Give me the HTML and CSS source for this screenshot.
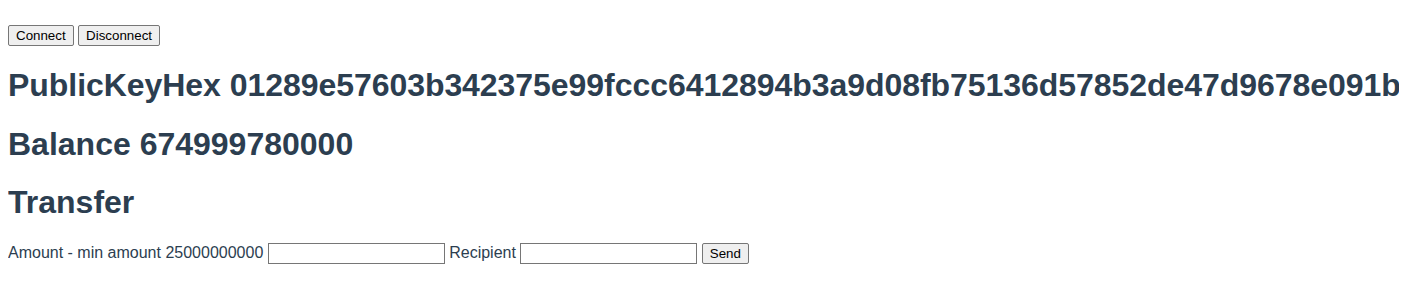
FILE: index.html
```html
<!DOCTYPE html>
<html>
<head>
<meta charset="utf-8">
<link rel="stylesheet" href="styles.css">
</head>
<body>
<div id="app" class="app">
  <p class="actions">
    <button class="btn">Connect</button>
    <button class="btn">Disconnect</button>
  </p>
  <h1 class="title key">PublicKeyHex 01289e57603b342375e99fccc6412894b3a9d08fb75136d57852de47d9678e091b</h1>
  <h1 class="title">Balance 674999780000</h1>
  <h1 class="title">Transfer</h1>
  <div class="form">
    <label class="lbl">Amount - min amount 25000000000</label>
    <input class="field" type="text">
    <label class="lbl">Recipient</label>
    <input class="field" type="text">
    <button class="btn">Send</button>
  </div>
</div>
</body>
</html>
```
FILE: styles.css
```css
body {
  margin: 8px;
  font-family: "Liberation Sans", Arial, sans-serif;
  font-size: 16px;
  color: #2c3e50;
  background: #fff;
}
.app {
  white-space: nowrap;
}
.actions {
  margin: 17px 0 0 0;
}
.btn {
  font-family: "Liberation Sans", Arial, sans-serif;
  font-size: 13.333px;
  color: #000;
  background: #efefef;
  border: 1px solid #767676;
  border-radius: 2px;
  padding: 2px 7px;
}
.title {
  font-size: 32px;
  font-weight: bold;
  margin: 21.44px 0;
}
.key {
  letter-spacing: -0.05px;
}
.field {
  width: 171px;
  height: 17px;
  border: 1px solid #767676;
  padding: 1px 2px;
  font-size: 13.333px;
}
```
